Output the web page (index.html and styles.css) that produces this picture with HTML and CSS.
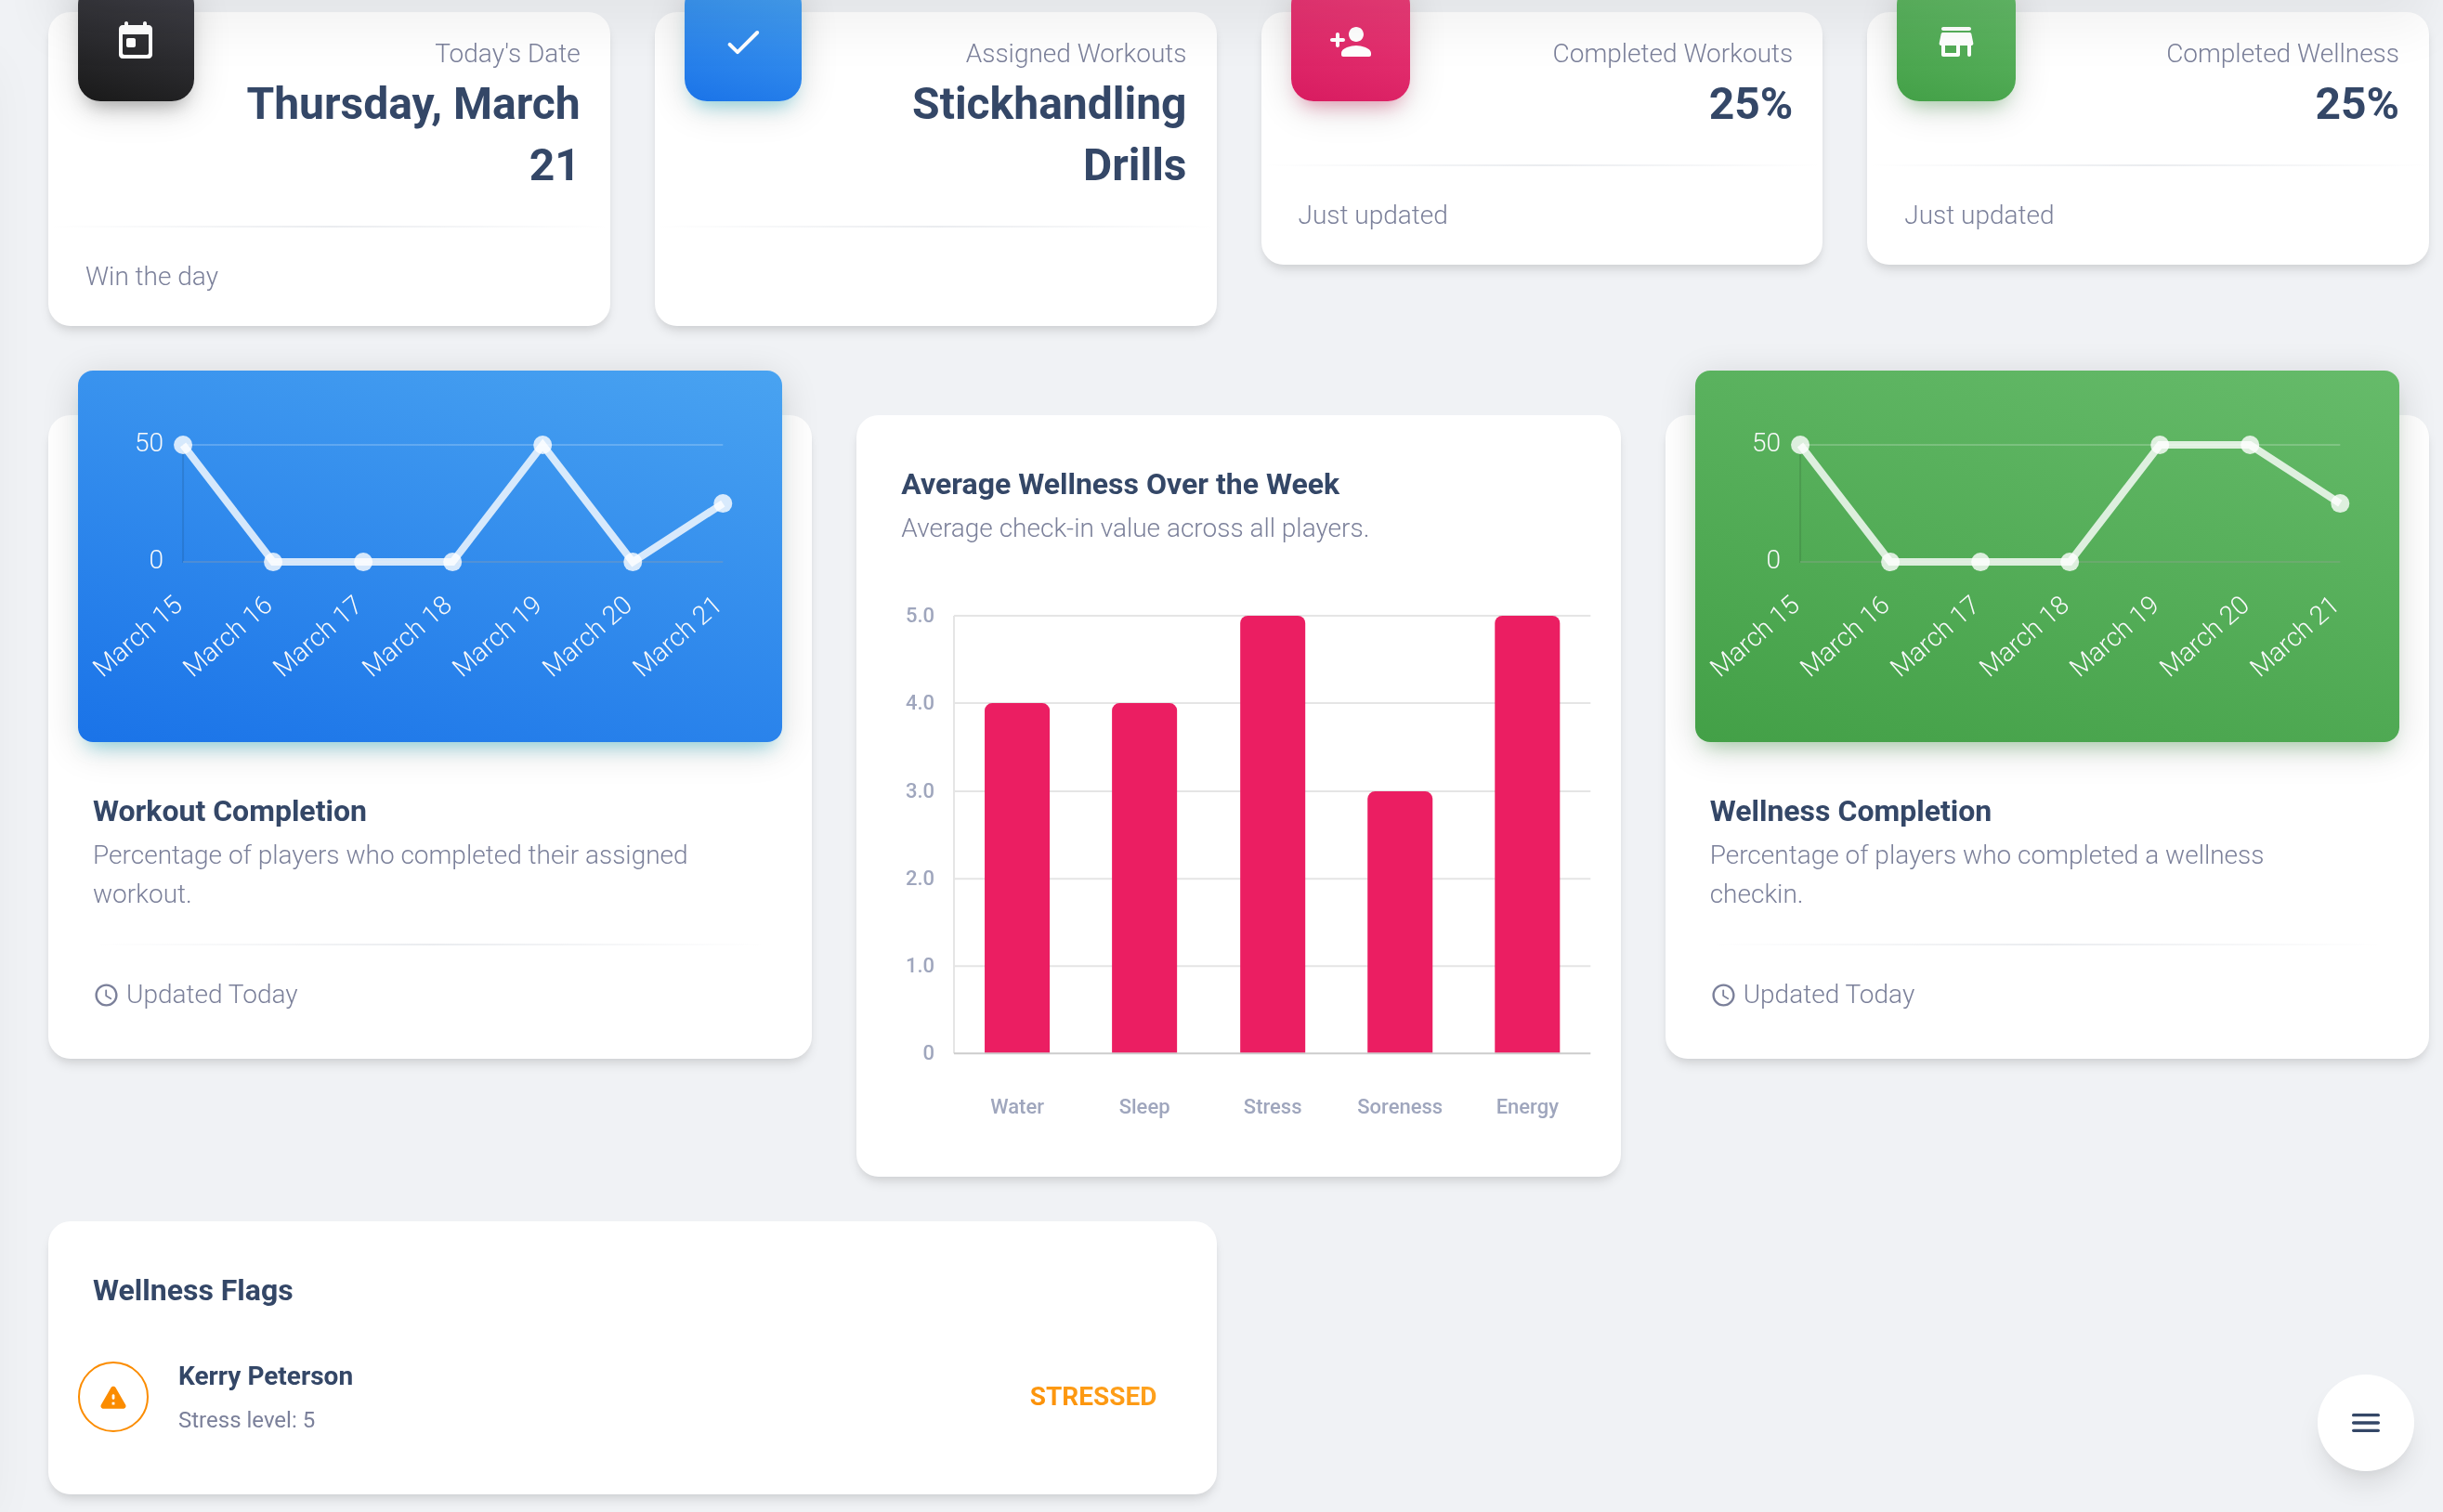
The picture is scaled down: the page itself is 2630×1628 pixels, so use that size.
FILE: index.html
```html
<!DOCTYPE html>
<html lang="en">
<head>
<meta charset="utf-8">
<meta name="viewport" content="width=device-width, initial-scale=1">
<title>Team Dashboard</title>
<link rel="stylesheet" href="styles.css">
</head>
<body>
<main class="dashboard">
  <section class="stats" aria-label="Summary">
    <article class="card stat">
      <div class="stat-head">
        <div class="stat-icon dark">
          <svg class="icon" viewBox="0 0 24 24" aria-hidden="true"><path fill-rule="evenodd" d="M19 3h-1V2c0-.55-.45-1-1-1s-1 .45-1 1v1H8V2c0-.55-.45-1-1-1s-1 .45-1 1v1H5c-1.11 0-1.99.9-1.99 2L3 19c0 1.1.89 2 2 2h14c1.1 0 2-.9 2-2V5c0-1.1-.9-2-2-2zm-1 16H6c-.55 0-1-.45-1-1V8h14v10c0 .55-.45 1-1 1zM8 10h3c.55 0 1 .45 1 1v3c0 .55-.45 1-1 1H8c-.55 0-1-.45-1-1v-3c0-.55.45-1 1-1z"/></svg>
        </div>
        <div class="stat-text">
          <p class="label">Today's Date</p>
          <h2 class="value">Thursday, March 21</h2>
        </div>
      </div>
      <hr class="divider">
      <p class="stat-foot">Win the day</p>
    </article>

    <article class="card stat">
      <div class="stat-head">
        <div class="stat-icon blue">
          <svg class="icon" viewBox="0 0 24 24" aria-hidden="true"><path d="M9 16.2l-3.5-3.5c-.39-.39-1.01-.39-1.4 0-.39.39-.39 1.01 0 1.4l4.19 4.19c.39.39 1.02.39 1.41 0L20.3 7.7c.39-.39.39-1.01 0-1.4-.39-.39-1.01-.39-1.4 0L9 16.2z"/></svg>
        </div>
        <div class="stat-text">
          <p class="label">Assigned Workouts</p>
          <h2 class="value">Stickhandling Drills</h2>
        </div>
      </div>
      <hr class="divider">
      <p class="stat-foot"></p>
    </article>

    <article class="card stat">
      <div class="stat-head">
        <div class="stat-icon pink">
          <svg class="icon" viewBox="0 0 24 24" aria-hidden="true"><path d="M15 12c2.21 0 4-1.79 4-4s-1.79-4-4-4-4 1.79-4 4 1.79 4 4 4zm-9-2V8c0-.55-.45-1-1-1s-1 .45-1 1v2H2c-.55 0-1 .45-1 1s.45 1 1 1h2v2c0 .55.45 1 1 1s1-.45 1-1v-2h2c.55 0 1-.45 1-1s-.45-1-1-1H6zm9 4c-2.67 0-8 1.34-8 4v1c0 .55.45 1 1 1h14c.55 0 1-.45 1-1v-1c0-2.66-5.33-4-8-4z"/></svg>
        </div>
        <div class="stat-text">
          <p class="label">Completed Workouts</p>
          <h2 class="value">25%</h2>
        </div>
      </div>
      <hr class="divider">
      <p class="stat-foot">Just updated</p>
    </article>

    <article class="card stat">
      <div class="stat-head">
        <div class="stat-icon green">
          <svg class="icon" viewBox="0 0 24 24" aria-hidden="true"><path d="M5 6h14c.55 0 1-.45 1-1s-.45-1-1-1H5c-.55 0-1 .45-1 1s.45 1 1 1zm15.16 1.8c-.09-.46-.5-.8-.98-.8H4.82c-.48 0-.89.34-.98.8l-1 5c-.12.62.35 1.2.98 1.2H4v5c0 .55.45 1 1 1h8c.55 0 1-.45 1-1v-5h4v5c0 .55.45 1 1 1s1-.45 1-1v-5h.18c.63 0 1.1-.58.98-1.2l-1-5zM12 18H6v-4h6v4z"/></svg>
        </div>
        <div class="stat-text">
          <p class="label">Completed Wellness</p>
          <h2 class="value">25%</h2>
        </div>
      </div>
      <hr class="divider">
      <p class="stat-foot">Just updated</p>
    </article>
  </section>

  <section class="charts" aria-label="Charts">
    <article class="card report">
      <div class="plot blue">
        <svg class="line-chart" viewBox="0 0 758 400" role="img" aria-label="Workout completion by day">
          <path class="grid" d="M113 80H694M113 206H694"/>
          <path class="axis" d="M113 80V207M113 206H694"/>
          <polyline class="series" points="113,80 210,206 307,206 403,206 500,80 597,206 694,143"/>
          <g class="dots"><circle cx="113" cy="80" r="10"/><circle cx="210" cy="206" r="10"/><circle cx="307" cy="206" r="10"/><circle cx="403" cy="206" r="10"/><circle cx="500" cy="80" r="10"/><circle cx="597" cy="206" r="10"/><circle cx="694" cy="143" r="10"/></g>
          <g class="ticks">
            <text x="92" y="87">50</text><text x="92" y="213">0</text>
            <text transform="translate(114 255) rotate(-41)">March 15</text>
            <text transform="translate(211 255) rotate(-41)">March 16</text>
            <text transform="translate(308 255) rotate(-41)">March 17</text>
            <text transform="translate(404 255) rotate(-41)">March 18</text>
            <text transform="translate(501 255) rotate(-41)">March 19</text>
            <text transform="translate(598 255) rotate(-41)">March 20</text>
            <text transform="translate(695 255) rotate(-41)">March 21</text>
          </g>
        </svg>
      </div>
      <div class="report-body">
        <h3 class="title">Workout Completion</h3>
        <p class="subtitle">Percentage of players who completed their assigned workout.</p>
        <hr class="divider">
        <p class="updated"><svg class="clock" viewBox="0 0 24 24" aria-hidden="true"><path d="M11.99 2C6.47 2 2 6.48 2 12s4.47 10 9.99 10C17.52 22 22 17.52 22 12S17.52 2 11.99 2zM12 20c-4.42 0-8-3.58-8-8s3.58-8 8-8 8 3.58 8 8-3.58 8-8 8zm-.22-13h-.06c-.4 0-.72.32-.72.72v4.72c0 .35.18.68.49.86l4.15 2.49c.34.2.78.1.98-.24.21-.34.1-.79-.25-.99l-3.87-2.3V7.72c0-.4-.32-.72-.72-.72z"/></svg>Updated Today</p>
      </div>
    </article>

    <article class="card wellness">
      <div class="wellness-head">
        <h3 class="title">Average Wellness Over the Week</h3>
        <p class="subtitle">Average check-in value across all players.</p>
      </div>
      <svg class="bar-chart" viewBox="0 0 758 630" role="img" aria-label="Average wellness by category">
        <path class="bar-grid" d="M73 58H758M73 152H758M73 247H758M73 341H758M73 435H758M73 58V529"/>
        <g class="bars">
          <path d="M106 529V160a8 8 0 0 1 8-8h54a8 8 0 0 1 8 8V529z"/>
          <path d="M243 529V160a8 8 0 0 1 8-8h54a8 8 0 0 1 8 8V529z"/>
          <path d="M381 529V66a8 8 0 0 1 8-8h54a8 8 0 0 1 8 8V529z"/>
          <path d="M518 529V255a8 8 0 0 1 8-8h54a8 8 0 0 1 8 8V529z"/>
          <path d="M655 529V66a8 8 0 0 1 8-8h54a8 8 0 0 1 8 8V529z"/>
        </g>
        <path class="bar-base" d="M73 529H758"/>
        <g class="bar-y">
          <text x="52" y="65">5.0</text><text x="52" y="159">4.0</text><text x="52" y="254">3.0</text><text x="52" y="348">2.0</text><text x="52" y="442">1.0</text><text x="52" y="536">0</text>
        </g>
        <g class="bar-x">
          <text x="141" y="594">Water</text><text x="278" y="594">Sleep</text><text x="416" y="594">Stress</text><text x="553" y="594">Soreness</text><text x="690" y="594">Energy</text>
        </g>
      </svg>
    </article>

    <article class="card report">
      <div class="plot green">
        <svg class="line-chart" viewBox="0 0 758 400" role="img" aria-label="Wellness completion by day">
          <path class="grid" d="M113 80H694M113 206H694"/>
          <path class="axis" d="M113 80V207M113 206H694"/>
          <polyline class="series" points="113,80 210,206 307,206 403,206 500,80 597,80 694,143"/>
          <g class="dots"><circle cx="113" cy="80" r="10"/><circle cx="210" cy="206" r="10"/><circle cx="307" cy="206" r="10"/><circle cx="403" cy="206" r="10"/><circle cx="500" cy="80" r="10"/><circle cx="597" cy="80" r="10"/><circle cx="694" cy="143" r="10"/></g>
          <g class="ticks">
            <text x="92" y="87">50</text><text x="92" y="213">0</text>
            <text transform="translate(114 255) rotate(-41)">March 15</text>
            <text transform="translate(211 255) rotate(-41)">March 16</text>
            <text transform="translate(308 255) rotate(-41)">March 17</text>
            <text transform="translate(404 255) rotate(-41)">March 18</text>
            <text transform="translate(501 255) rotate(-41)">March 19</text>
            <text transform="translate(598 255) rotate(-41)">March 20</text>
            <text transform="translate(695 255) rotate(-41)">March 21</text>
          </g>
        </svg>
      </div>
      <div class="report-body">
        <h3 class="title">Wellness Completion</h3>
        <p class="subtitle">Percentage of players who completed a wellness checkin.</p>
        <hr class="divider">
        <p class="updated"><svg class="clock" viewBox="0 0 24 24" aria-hidden="true"><path d="M11.99 2C6.47 2 2 6.48 2 12s4.47 10 9.99 10C17.52 22 22 17.52 22 12S17.52 2 11.99 2zM12 20c-4.42 0-8-3.58-8-8s3.58-8 8-8 8 3.58 8 8-3.58 8-8 8zm-.22-13h-.06c-.4 0-.72.32-.72.72v4.72c0 .35.18.68.49.86l4.15 2.49c.34.2.78.1.98-.24.21-.34.1-.79-.25-.99l-3.87-2.3V7.72c0-.4-.32-.72-.72-.72z"/></svg>Updated Today</p>
      </div>
    </article>
  </section>

  <section class="lists" aria-label="Flags">
    <article class="card flags">
      <h3 class="title">Wellness Flags</h3>
      <ul class="flag-list">
        <li class="flag">
          <span class="flag-icon"><svg viewBox="0 0 24 24" aria-hidden="true"><path d="M4.47 21h15.06c1.54 0 2.5-1.67 1.73-3L13.73 4.99c-.77-1.33-2.69-1.33-3.46 0L2.74 18c-.77 1.33.19 3 1.73 3zM12 14c-.55 0-1-.45-1-1v-2c0-.55.45-1 1-1s1 .45 1 1v2c0 .55-.45 1-1 1zm1 4h-2v-2h2v2z"/></svg></span>
          <div class="flag-text">
            <p class="flag-name">Kerry Peterson</p>
            <p class="flag-note">Stress level: 5</p>
          </div>
          <span class="flag-status">STRESSED</span>
        </li>
      </ul>
    </article>
  </section>
</main>

<button class="menu-button" type="button" aria-label="Open menu">
  <svg viewBox="0 0 24 24" aria-hidden="true"><path d="M4 18h16c.55 0 1-.45 1-1s-.45-1-1-1H4c-.55 0-1 .45-1 1s.45 1 1 1zm0-5h16c.55 0 1-.45 1-1s-.45-1-1-1H4c-.55 0-1 .45-1 1s.45 1 1 1zM3 7c0 .55.45 1 1 1h16c.55 0 1-.45 1-1s-.45-1-1-1H4c-.55 0-1 .45-1 1z"/></svg>
</button>
</body>
</html>
```

FILE: styles.css
```css
:root {
  --ink: #344767;
  --muted: #7b809a;
  --soft: #9fa6bd;
  --blue: linear-gradient(195deg, #49a3f1, #1a73e8);
  --green: linear-gradient(195deg, #66bb6a, #43a047);
  --pink: linear-gradient(195deg, #ec407a, #d81b60);
  --dark: linear-gradient(195deg, #42424a, #191919);
  --orange: linear-gradient(195deg, #ffa726, #fb8c00);
}

* {
  box-sizing: border-box;
  margin: 0;
  padding: 0;
}

body {
  background: #f0f2f5;
  color: var(--ink);
  font-family: Roboto, "Liberation Sans", sans-serif;
  font-size: 28px;
  line-height: 42px;
}

body::before,
body::after {
  content: "";
  position: fixed;
  pointer-events: none;
  box-shadow: 0 40px 54px rgba(0, 0, 0, 0.05);
}

body::before {
  z-index: 2;
  top: -127px;
  left: 52px;
  right: 15px;
  height: 120px;
}

body::after {
  z-index: -1;
  top: 32px;
  bottom: 32px;
  left: -211px;
  width: 200px;
}

.dashboard {
  padding: 13px 15px 20px 52px;
}

.card {
  background: #fff;
  border-radius: 24px;
  box-shadow: 0 8px 12px -2px rgba(0, 0, 0, 0.1), 0 4px 8px -2px rgba(0, 0, 0, 0.06);
}

.divider {
  height: 2px;
  margin: 32px 0;
  border: 0;
  background: linear-gradient(90deg, rgba(52, 71, 103, 0), rgba(52, 71, 103, 0.1), rgba(52, 71, 103, 0));
}

.blue {
  background: var(--blue);
  box-shadow: 0 8px 40px rgba(0, 0, 0, 0.14), 0 14px 20px -10px rgba(0, 187, 212, 0.4);
}

.green {
  background: var(--green);
  box-shadow: 0 8px 40px rgba(0, 0, 0, 0.14), 0 14px 20px -10px rgba(76, 175, 79, 0.4);
}

.pink {
  background: var(--pink);
  box-shadow: 0 8px 40px rgba(0, 0, 0, 0.14), 0 14px 20px -10px rgba(233, 30, 98, 0.4);
}

.dark {
  background: var(--dark);
  box-shadow: 0 8px 40px rgba(0, 0, 0, 0.14), 0 14px 20px -10px rgba(64, 64, 64, 0.4);
}

/* Summary cards */
.stats {
  display: grid;
  grid-template-columns: repeat(4, 1fr);
  gap: 48px;
  align-items: start;
}

.stat-head {
  display: flex;
  justify-content: space-between;
  padding: 24px 32px 0;
}

.stat-icon {
  display: flex;
  align-items: center;
  justify-content: center;
  width: 128px;
  height: 128px;
  margin: -56px 0 -200px;
  border-radius: 24px;
}

.icon {
  width: 48px;
  height: 48px;
  fill: #fff;
}

.stat-text {
  text-align: right;
}

.label {
  color: var(--muted);
  font-weight: 300;
}

.value {
  font-size: 48px;
  font-weight: 700;
  line-height: 66px;
}

.stat-foot {
  min-height: 74px;
  padding: 0 40px 32px;
  color: var(--muted);
  font-weight: 300;
}

/* Chart cards */
.charts {
  display: grid;
  grid-template-columns: repeat(3, 1fr);
  gap: 48px;
  align-items: start;
  margin-top: 96px;
}

.report {
  padding: 0 32px;
}

.plot {
  margin-top: -48px;
  border-radius: 16px;
}

.line-chart,
.bar-chart {
  display: block;
  width: 100%;
  height: auto;
}

.grid {
  fill: none;
  stroke: rgba(255, 255, 255, 0.2);
  stroke-width: 2;
}

.axis {
  fill: none;
  stroke: rgba(0, 0, 0, 0.1);
  stroke-width: 2;
}

.series {
  fill: none;
  stroke: rgba(255, 255, 255, 0.8);
  stroke-width: 8;
}

.dots {
  fill: rgba(255, 255, 255, 0.8);
}

.ticks {
  fill: #f8f9fa;
  font-size: 28px;
  font-weight: 300;
  text-anchor: end;
}

.report-body {
  padding: 48px 16px;
}

.title {
  font-size: 32px;
  font-weight: 700;
  line-height: 53px;
}

.subtitle {
  padding-right: 32px;
  color: var(--muted);
  font-weight: 300;
}

.updated {
  display: flex;
  align-items: center;
  gap: 7px;
  color: var(--muted);
  font-weight: 300;
}

.clock {
  width: 29px;
  height: 29px;
  fill: var(--muted);
}

.wellness {
  padding: 48px 32px 32px;
}

.wellness-head {
  padding: 0 16px 15px;
}

.bar-grid {
  fill: none;
  stroke: #e5e5e5;
  stroke-width: 2;
}

.bar-base {
  stroke: #cccccc;
  stroke-width: 2;
}

.bars {
  fill: #eb1e62;
}

.bar-y,
.bar-x {
  fill: var(--soft);
  font-size: 22px;
  font-weight: 500;
}

.bar-y {
  text-anchor: end;
}

.bar-x {
  text-anchor: middle;
}

/* Flags list */
.lists {
  display: grid;
  grid-template-columns: repeat(2, 1fr);
  gap: 48px;
  margin-top: 48px;
}

.flags {
  padding: 48px 32px 62px;
}

.flags .title {
  padding: 0 16px;
}

.flag-list {
  margin-top: 45px;
  list-style: none;
}

.flag {
  display: flex;
  align-items: center;
  gap: 32px;
  padding-right: 32px;
}

.flag-icon {
  display: flex;
  align-items: center;
  justify-content: center;
  width: 76px;
  height: 76px;
  border: 2px solid #fb8c00;
  border-radius: 50%;
}

.flag-icon svg {
  width: 34px;
  height: 34px;
  fill: #fb8c00;
}

.flag-text {
  display: grid;
  gap: 8px;
  flex: 1;
}

.flag-name {
  font-weight: 700;
}

.flag-note {
  color: var(--muted);
  font-size: 24px;
  line-height: 36px;
}

.flag-status {
  background: var(--orange);
  background-clip: text;
  color: transparent;
  font-weight: 700;
}

.menu-button {
  position: fixed;
  z-index: 3;
  right: 31px;
  bottom: 44px;
  display: flex;
  align-items: center;
  justify-content: center;
  width: 104px;
  height: 104px;
  border: 0;
  border-radius: 50%;
  background: #fff;
  box-shadow: 0 20px 30px -6px rgba(0, 0, 0, 0.1), 0 8px 12px -4px rgba(0, 0, 0, 0.05);
  cursor: pointer;
}

.menu-button svg {
  width: 40px;
  height: 40px;
  fill: var(--ink);
}
```
